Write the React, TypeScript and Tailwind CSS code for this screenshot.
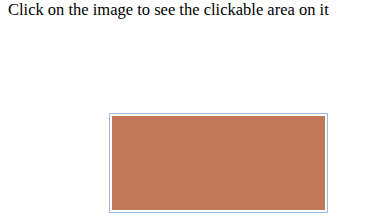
export default function App() {
  return (
    <div className="w-[374px] h-[224px] bg-white text-black font-['Liberation_Serif',serif]">
      <p className="pl-2 pt-[1px] text-[16.5px] leading-[18px]">
        Click on the image to see the clickable area on it
      </p>
      <div className="mt-[94px] ml-[109px] w-[219px] h-[100px] border border-[#9fb6e6] p-[2px]">
        <div className="w-full h-full bg-[#c07859]" />
      </div>
    </div>
  );
}
